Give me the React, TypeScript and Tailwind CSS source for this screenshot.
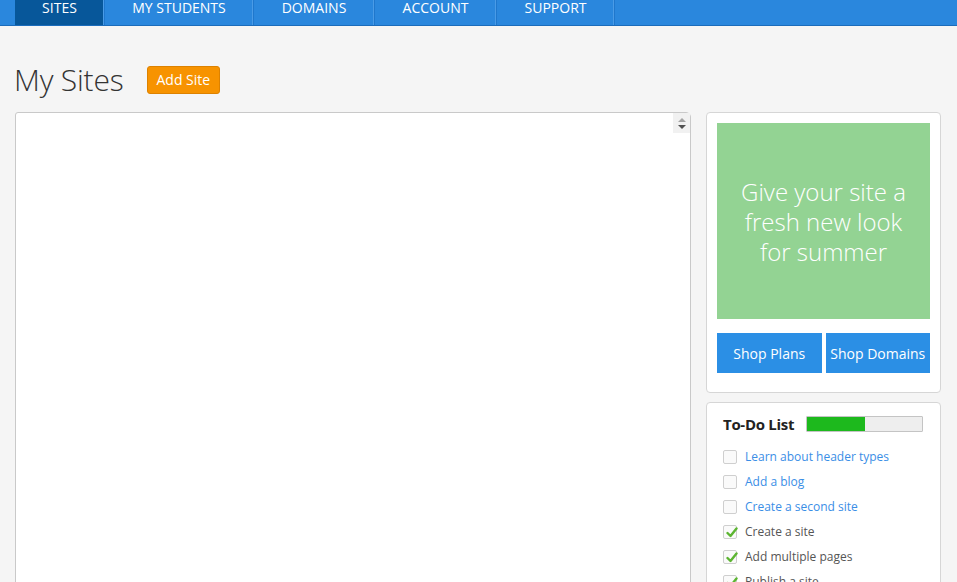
import React from "react";

const tabs = ["SITES", "MY STUDENTS", "DOMAINS", "ACCOUNT", "SUPPORT"];
const tabWidths = ["w-[90px]", "w-[149px]", "w-[121px]", "w-[122px]", "w-[118px]"];

const todos = [
  { label: "Learn about header types", done: false },
  { label: "Add a blog", done: false },
  { label: "Create a second site", done: false },
  { label: "Create a site", done: true },
  { label: "Add multiple pages", done: true },
  { label: "Publish a site", done: true },
];

function Check() {
  return (
    <svg width="12" height="11" viewBox="0 0 12 11" className="absolute left-[2px] top-[1px]">
      <path d="M1.5 6 L4.5 9 L10.5 1.5" fill="none" stroke="#5cb531" strokeWidth="2.4" strokeLinecap="round" strokeLinejoin="round" />
    </svg>
  );
}

export default function App() {
  return (
    <div className="h-[582px] overflow-hidden bg-[#f5f5f5] font-['Open_Sans',sans-serif]">
      {/* nav */}
      <div className="flex h-[26px] bg-[#2a87dd] border-b border-[#1b6cbb] pl-[15px]">
        {tabs.map((t, i) => (
          <div
            key={t}
            className={`${tabWidths[i]} flex justify-center leading-[15px] text-[14px] text-white border-r border-[#1f77cc] shadow-[inset_-1px_0_0_#4a9be6] ${
              i === 0 ? "bg-[#07579a]" : ""
            }`}
          >
            {t}
          </div>
        ))}
      </div>

      {/* title */}
      <div className="flex items-center gap-[23px] pl-[14px] pt-[38px] h-[86px] pb-[17px]">
        <h1 className="text-[30px] font-light text-[#333] leading-none tracking-[-0.2px]">My Sites</h1>
        <button className="h-[28px] px-[9px] rounded-[3px] bg-[#f79300] border border-[#dd8200] text-white text-[14px]">
          Add Site
        </button>
      </div>

      <div className="flex gap-[15px] pl-[15px]">
        {/* main panel */}
        <div className="relative w-[676px] h-[480px] bg-white border border-[#c9c9c9] rounded-t-[3px] rounded-tr-[5px]">
          <div className="absolute right-0 top-0 w-[17px] h-[20px] bg-[#f1f1f1] flex flex-col items-center justify-center gap-[3px]">
            <div className="w-0 h-0 border-l-[4px] border-r-[4px] border-b-[4px] border-transparent border-b-[#a3a3a3]" />
            <div className="w-0 h-0 border-l-[4px] border-r-[4px] border-t-[4px] border-transparent border-t-[#505050]" />
          </div>
        </div>

        {/* right column */}
        <div className="w-[235px] flex flex-col gap-[9px]">
          <div className="bg-white border border-[#d6d6d6] rounded-[4px] p-[10px] pb-[19px]">
            <div className="h-[196px] bg-[#93d393] flex items-center justify-center text-center text-white text-[24px] font-light leading-[30px] pt-[2px]">
              <div>
                Give your site a
                <br />
                fresh new look
                <br />
                for summer
              </div>
            </div>
            <div className="flex gap-[4px] mt-[14px]">
              <button className="flex-1 h-[40px] bg-[#2b8fe5] text-white text-[14px]">Shop Plans</button>
              <button className="flex-1 h-[40px] bg-[#2b8fe5] text-white text-[14px]">Shop Domains</button>
            </div>
          </div>

          <div className="bg-white border border-[#d6d6d6] rounded-[4px] pl-[16px] pr-[17px] pt-[10px] h-[200px]">
            <div className="flex items-center">
              <div className="flex-1 whitespace-nowrap text-[15px] font-bold text-[#222] tracking-[-0.3px]">To-Do List</div>
              <div className="w-[117px] h-[16px] border border-[#c4c4c4] bg-[#eeeeee] rounded-[1px]">
                <div className="w-1/2 h-full bg-[#1db91d]" />
              </div>
            </div>
            <div className="flex flex-col mt-[9px]">
              {todos.map((t) => (
                <div key={t.label} className="flex items-center gap-[8px] h-[25px]">
                  <div className="relative w-[14px] h-[14px] border border-[#cfcfcf] rounded-[2px] bg-[#fafafa]">
                    {t.done && <Check />}
                  </div>
                  <span className={`text-[12px] whitespace-nowrap ${t.done ? "text-[#555]" : "text-[#3a8ee6]"}`}>{t.label}</span>
                </div>
              ))}
            </div>
          </div>
        </div>
      </div>
    </div>
  );
}
